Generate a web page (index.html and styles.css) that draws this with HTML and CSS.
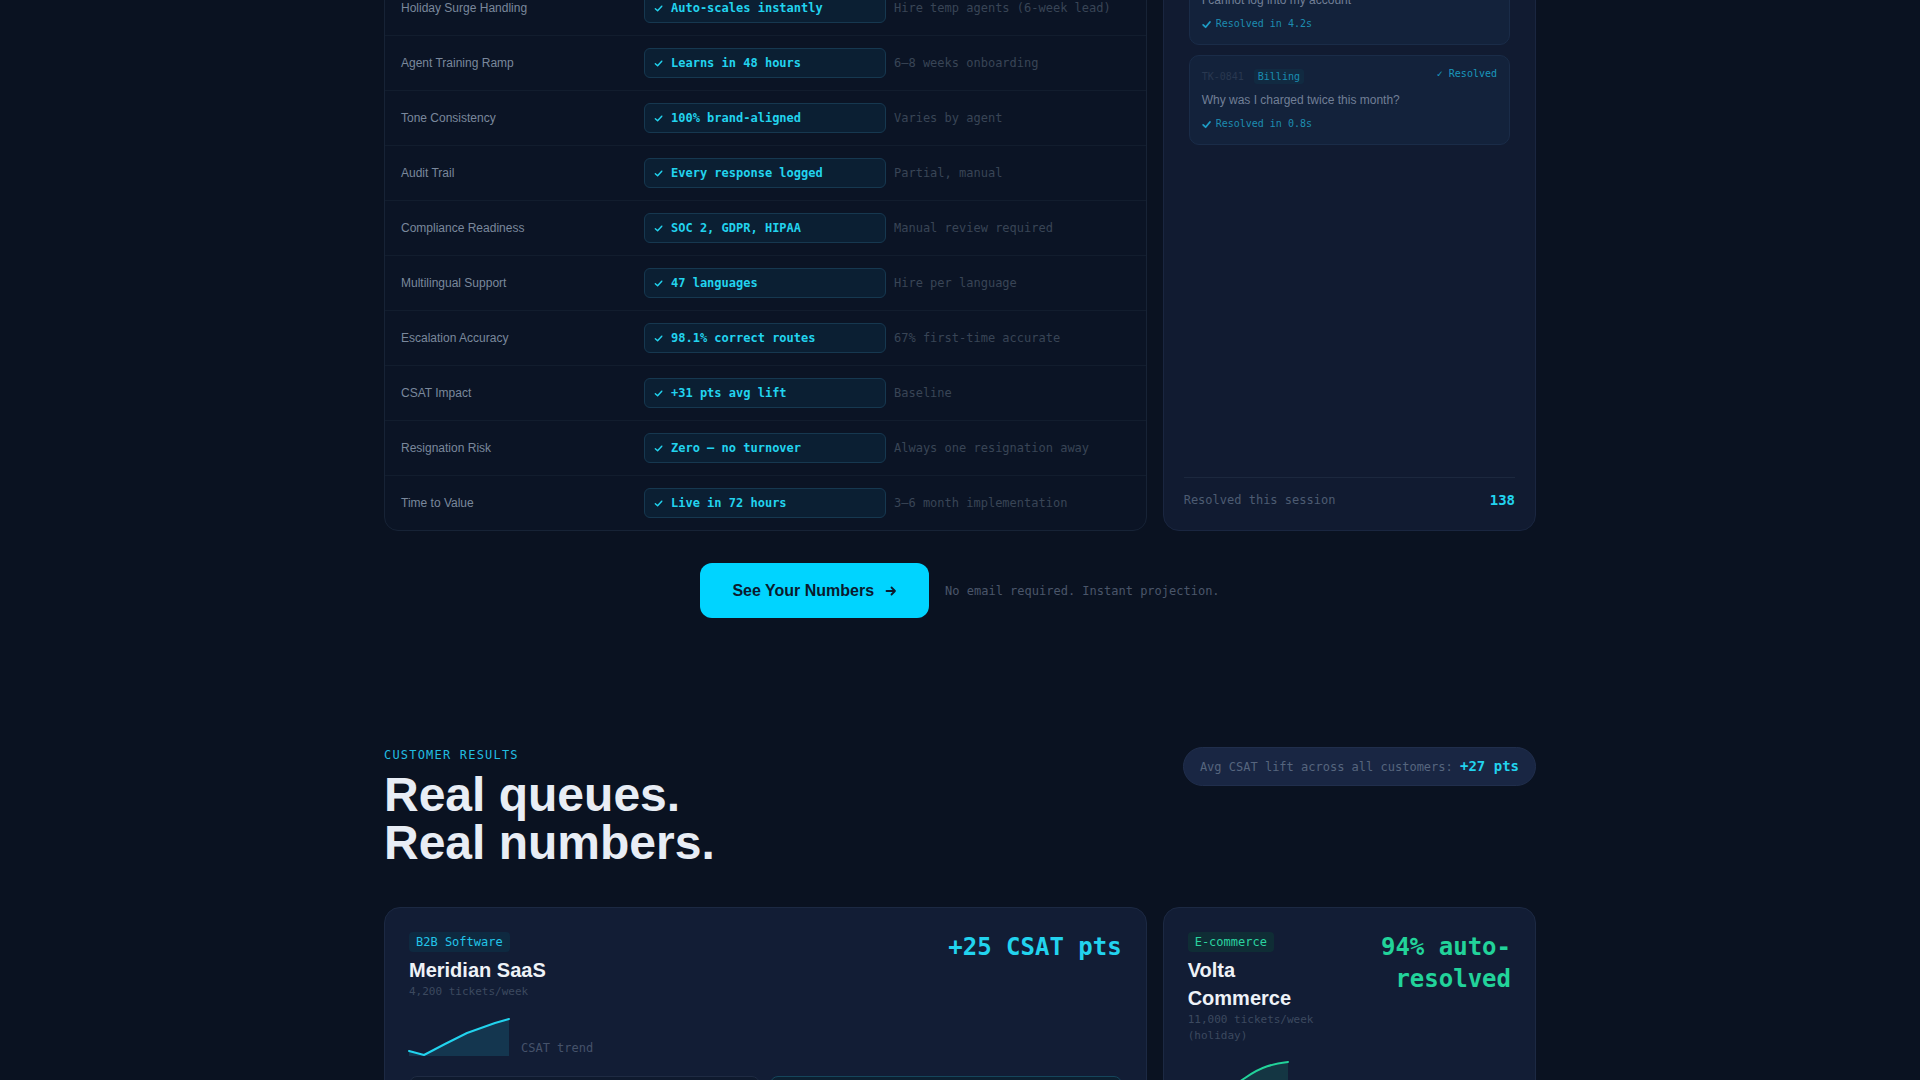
FILE: index.html
```html
<!DOCTYPE html>
<html lang="en">
<head>
<meta charset="utf-8">
<title>Resolve — AI support that scales</title>
<link rel="stylesheet" href="styles.css">
</head>
<body>
<main>
  <section class="compare">
    <div class="wrap">
      <header class="sec-head">
        <p class="eyebrow">Side by side</p>
        <h2 class="sec-title">One agent. Every shift.</h2>
        <p class="sec-lead">How an AI agent stacks up against a traditional support team.</p>
      </header>

      <div class="split">
        <div class="table-card">
          <div class="trow thead">
            <span>Capability</span>
            <span>Resolve AI</span>
            <span>Human team</span>
          </div>
          <div class="trow">
            <span class="cap">First Response Time</span>
            <span class="ai"><svg class="tick" viewBox="0 0 10 10"><path d="M1.5 5.3 L4 7.6 L8.6 2.4"/></svg>Under 2 seconds</span>
            <span class="human">4–12 hours</span>
          </div>
          <div class="trow">
            <span class="cap">24/7 Coverage</span>
            <span class="ai"><svg class="tick" viewBox="0 0 10 10"><path d="M1.5 5.3 L4 7.6 L8.6 2.4"/></svg>Always on</span>
            <span class="human">Shift-dependent</span>
          </div>
          <div class="trow">
            <span class="cap">Cost per Resolution</span>
            <span class="ai"><svg class="tick" viewBox="0 0 10 10"><path d="M1.5 5.3 L4 7.6 L8.6 2.4"/></svg>$0.38 flat</span>
            <span class="human">$6–$14 loaded</span>
          </div>
          <div class="trow" id="row-surge">
            <span class="cap">Holiday Surge Handling</span>
            <span class="ai"><svg class="tick" viewBox="0 0 10 10"><path d="M1.5 5.3 L4 7.6 L8.6 2.4"/></svg>Auto-scales instantly</span>
            <span class="human">Hire temp agents (6-week lead)</span>
          </div>
          <div class="trow">
            <span class="cap">Agent Training Ramp</span>
            <span class="ai"><svg class="tick" viewBox="0 0 10 10"><path d="M1.5 5.3 L4 7.6 L8.6 2.4"/></svg>Learns in 48 hours</span>
            <span class="human">6–8 weeks onboarding</span>
          </div>
          <div class="trow">
            <span class="cap">Tone Consistency</span>
            <span class="ai"><svg class="tick" viewBox="0 0 10 10"><path d="M1.5 5.3 L4 7.6 L8.6 2.4"/></svg>100% brand-aligned</span>
            <span class="human">Varies by agent</span>
          </div>
          <div class="trow">
            <span class="cap">Audit Trail</span>
            <span class="ai"><svg class="tick" viewBox="0 0 10 10"><path d="M1.5 5.3 L4 7.6 L8.6 2.4"/></svg>Every response logged</span>
            <span class="human">Partial, manual</span>
          </div>
          <div class="trow">
            <span class="cap">Compliance Readiness</span>
            <span class="ai"><svg class="tick" viewBox="0 0 10 10"><path d="M1.5 5.3 L4 7.6 L8.6 2.4"/></svg>SOC 2, GDPR, HIPAA</span>
            <span class="human">Manual review required</span>
          </div>
          <div class="trow">
            <span class="cap">Multilingual Support</span>
            <span class="ai"><svg class="tick" viewBox="0 0 10 10"><path d="M1.5 5.3 L4 7.6 L8.6 2.4"/></svg>47 languages</span>
            <span class="human">Hire per language</span>
          </div>
          <div class="trow">
            <span class="cap">Escalation Accuracy</span>
            <span class="ai"><svg class="tick" viewBox="0 0 10 10"><path d="M1.5 5.3 L4 7.6 L8.6 2.4"/></svg>98.1% correct routes</span>
            <span class="human">67% first-time accurate</span>
          </div>
          <div class="trow">
            <span class="cap">CSAT Impact</span>
            <span class="ai"><svg class="tick" viewBox="0 0 10 10"><path d="M1.5 5.3 L4 7.6 L8.6 2.4"/></svg>+31 pts avg lift</span>
            <span class="human">Baseline</span>
          </div>
          <div class="trow">
            <span class="cap">Resignation Risk</span>
            <span class="ai"><svg class="tick" viewBox="0 0 10 10"><path d="M1.5 5.3 L4 7.6 L8.6 2.4"/></svg>Zero — no turnover</span>
            <span class="human">Always one resignation away</span>
          </div>
          <div class="trow">
            <span class="cap">Time to Value</span>
            <span class="ai"><svg class="tick" viewBox="0 0 10 10"><path d="M1.5 5.3 L4 7.6 L8.6 2.4"/></svg>Live in 72 hours</span>
            <span class="human">3–6 month implementation</span>
          </div>
        </div>

        <aside class="feed">
          <div class="feed-head">
            <div>
              <p class="feed-title">Live ticket feed</p>
              <p class="feed-sub">Streaming from the demo queue</p>
            </div>
            <span class="live"><i class="dot"></i>LIVE</span>
          </div>
          <div class="feed-list">
            <div class="ticket">
              <div class="t-head">
                <span class="t-id">TK-0839</span><span class="t-tag">Shipping</span>
                <span class="t-state">✓ Resolved</span>
              </div>
              <p class="t-q">Where is my order #48213?</p>
              <p class="t-done"><svg class="t-tick" viewBox="0 0 10 10"><path d="M1.3 5.4 L4 8 L8.8 2.2"/></svg>Resolved in 1.1s</p>
            </div>
            <div class="ticket">
              <div class="t-head">
                <span class="t-id">TK-0840</span><span class="t-tag">Account</span>
                <span class="t-state">✓ Resolved</span>
              </div>
              <p class="t-q">I cannot log into my account</p>
              <p class="t-done"><svg class="t-tick" viewBox="0 0 10 10"><path d="M1.3 5.4 L4 8 L8.8 2.2"/></svg>Resolved in 4.2s</p>
            </div>
            <div class="ticket">
              <div class="t-head">
                <span class="t-id">TK-0841</span><span class="t-tag">Billing</span>
                <span class="t-state">✓ Resolved</span>
              </div>
              <p class="t-q">Why was I charged twice this month?</p>
              <p class="t-done"><svg class="t-tick" viewBox="0 0 10 10"><path d="M1.3 5.4 L4 8 L8.8 2.2"/></svg>Resolved in 0.8s</p>
            </div>
          </div>
          <div class="feed-foot">
            <span>Resolved this session</span>
            <b>138</b>
          </div>
        </aside>
      </div>

      <div class="cta">
        <a class="btn" href="#roi">See Your Numbers
          <svg class="arrow" viewBox="0 0 12 12"><path d="M1.5 6 H10 M6.5 2.5 L10 6 L6.5 9.5"/></svg>
        </a>
        <span class="cta-note">No email required. Instant projection.</span>
      </div>
    </div>
  </section>

  <section class="results">
    <div class="wrap">
      <header class="res-head">
        <div>
          <p class="eyebrow">Customer results</p>
          <h2 class="res-title">Real queues.<br>Real numbers.</h2>
        </div>
        <p class="avg-pill">Avg CSAT lift across all customers: <b>+27 pts</b></p>
      </header>

      <div class="cases">
        <article class="case wide">
          <div class="case-top">
            <div class="case-id">
              <span class="tag">B2B Software</span>
              <h3 class="case-name">Meridian SaaS</h3>
              <p class="case-vol">4,200 tickets/week</p>
            </div>
            <p class="metric">+25 CSAT pts</p>
          </div>
          <div class="spark">
            <svg class="spark-svg" viewBox="0 0 100 40" preserveAspectRatio="none">
              <polygon class="area" points="0,35 15,39 36,28 58,17 86,7 100,3 100,40 0,40"/>
              <polyline class="line" points="0,35 15,39 36,28 58,17 86,7 100,3"/>
            </svg>
            <span class="spark-label">CSAT trend</span>
          </div>
          <div class="stats">
            <div class="stat">
              <p class="stat-k">Before</p>
              <p class="stat-v">CSAT 61 · first reply 9h 40m</p>
            </div>
            <div class="stat after">
              <p class="stat-k">After</p>
              <p class="stat-v">CSAT 86 · first reply 38s</p>
            </div>
          </div>
        </article>

        <article class="case">
          <div class="case-top">
            <div class="case-id">
              <span class="tag green">E-commerce</span>
              <h3 class="case-name">Volta Commerce</h3>
              <p class="case-vol">11,000 tickets/week (holiday)</p>
            </div>
            <p class="metric green">94% auto-resolved</p>
          </div>
          <div class="spark">
            <svg class="spark-svg" viewBox="0 0 100 40" preserveAspectRatio="none">
              <path class="area green" d="M0 38 C 20 37, 40 30, 57 18 S 85 4, 100 2 L100 40 L0 40 Z"/>
              <path class="line green" d="M0 38 C 20 37, 40 30, 57 18 S 85 4, 100 2"/>
            </svg>
            <span class="spark-label">Auto-resolution</span>
          </div>
          <div class="stats">
            <div class="stat">
              <p class="stat-k">Before</p>
              <p class="stat-v">31% deflected</p>
            </div>
            <div class="stat after green">
              <p class="stat-k">After</p>
              <p class="stat-v">94% resolved</p>
            </div>
          </div>
        </article>
      </div>
    </div>
  </section>
</main>
<script src="app.js"></script>
</body>
</html>
```

FILE: styles.css
```css
* { box-sizing: border-box; margin: 0; padding: 0; }

html { scroll-behavior: auto; background: #0a1221; }

body {
  background: #0a1221;
  color: #e6ebf3;
  font-family: "Liberation Sans", Arial, sans-serif;
}

.wrap { width: 1152px; margin: 0 auto; }

.eyebrow {
  font: 12px/16px "DejaVu Sans Mono", monospace;
  letter-spacing: 0.1em;
  text-transform: uppercase;
  color: #22bde0;
}

/* ---------- comparison ---------- */
.compare { padding: 96px 0 64px; }

.sec-head { margin-bottom: 40px; }
.sec-title { margin-top: 8px; font: 700 48px/48px "Liberation Sans", Arial, sans-serif; color: #e8edf5; }
.sec-lead { margin-top: 12px; font-size: 16px; line-height: 24px; color: #7c8aa0; }

.split {
  display: grid;
  grid-template-columns: repeat(3, 1fr);
  gap: 16px;
}

.table-card {
  grid-column: span 2;
  border: 1px solid #172336;
  border-radius: 14px;
  background: #0b1425;
  overflow: hidden;
}

.trow {
  display: grid;
  grid-template-columns: 235px 242px 1fr;
  column-gap: 8px;
  align-items: center;
  padding: 12px 16px;
  border-bottom: 1px solid #121d2e;
}
.trow:last-child { border-bottom: 0; }

.thead {
  font: 11px/16px "DejaVu Sans Mono", monospace;
  text-transform: uppercase;
  letter-spacing: 0.08em;
  color: #4f5d74;
}

.cap { font-size: 12px; line-height: 16px; color: #7a889c; }

.ai {
  display: flex;
  align-items: center;
  gap: 8px;
  height: 30px;
  padding: 0 9px;
  border: 1px solid #163850;
  border-radius: 6px;
  background: #0b1f33;
  font: 700 12px/16px "DejaVu Sans Mono", monospace;
  color: #22d3ee;
  white-space: nowrap;
}

.tick { width: 9px; height: 9px; flex: none; }
.tick path { fill: none; stroke: #22d3ee; stroke-width: 1.6; stroke-linecap: round; stroke-linejoin: round; }

.human { font: 12px/16px "DejaVu Sans Mono", monospace; color: #394556; white-space: nowrap; }

/* live ticket feed */
.feed {
  display: flex;
  flex-direction: column;
  min-height: 0;
  padding: 20px;
  border: 1px solid #1a2640;
  border-radius: 16px;
  background: #111b31;
}

.feed-head {
  display: flex;
  justify-content: space-between;
  align-items: flex-start;
  margin-bottom: 20px;
}
.feed-title { font-size: 14px; line-height: 20px; font-weight: 700; color: #d8e0eb; }
.feed-sub { margin-top: 4px; font: 11px/16px "DejaVu Sans Mono", monospace; color: #4a586e; }

.live {
  display: flex;
  align-items: center;
  gap: 6px;
  padding: 2px 8px;
  border-radius: 999px;
  background: #0e2a3a;
  font: 10px/16px "DejaVu Sans Mono", monospace;
  letter-spacing: 0.1em;
  color: #22d3ee;
}
.dot { width: 6px; height: 6px; border-radius: 50%; background: #22d3ee; }

.feed-list {
  flex: 1;
  min-height: 0;
  overflow: hidden;
  display: flex;
  flex-direction: column;
  gap: 10px;
  padding: 0 5px;
}

.ticket {
  flex: none;
  padding: 12px;
  border: 1px solid #1a2c48;
  border-radius: 10px;
  background: #13223b;
}

.t-head {
  display: flex;
  align-items: center;
  height: 16px;
  font: 10px/15px "DejaVu Sans Mono", monospace;
}
.t-id { color: #293850; }
.t-tag {
  margin-left: 10px;
  padding: 0 4px;
  border-radius: 3px;
  background: #112a41;
  color: #1a8db2;
}
.t-state { margin-left: auto; color: #1a97bd; align-self: flex-start; line-height: 12px; }

.t-q { margin-top: 8px; font-size: 12px; line-height: 16px; color: #717f96; }

.t-done {
  display: flex;
  align-items: center;
  gap: 5px;
  margin-top: 8px;
  font: 10px/16px "DejaVu Sans Mono", monospace;
  color: #1d8db1;
}
.t-tick { width: 9px; height: 9px; }
.t-tick path { fill: none; stroke: #1e9cc4; stroke-width: 2; stroke-linecap: round; stroke-linejoin: round; }

.feed-foot {
  display: flex;
  justify-content: space-between;
  align-items: center;
  margin-top: auto;
  padding-top: 12px;
  border-top: 1px solid #1c283e;
  font: 12px/20px "DejaVu Sans Mono", monospace;
  color: #4d5b72;
}
.feed-foot b { font-size: 14px; color: #22d3ee; }

/* call to action */
.cta {
  display: flex;
  justify-content: center;
  align-items: center;
  gap: 16px;
  margin-top: 32px;
}
.btn {
  display: inline-flex;
  align-items: center;
  gap: 11px;
  padding: 18px 32px;
  border-radius: 12px;
  background: #00d4ff;
  color: #0b1a2e;
  font: 700 16px/19px "Liberation Sans", Arial, sans-serif;
  text-decoration: none;
}
.arrow { width: 12px; height: 12px; }
.arrow path { fill: none; stroke: #0b1a2e; stroke-width: 1.8; stroke-linecap: round; stroke-linejoin: round; }
.cta-note { font: 12px/16px "DejaVu Sans Mono", monospace; color: #4a566a; }

/* ---------- customer results ---------- */
.results { padding: 65px 0 96px; }

.res-head {
  display: flex;
  justify-content: space-between;
  align-items: flex-start;
}
.res-title {
  margin-top: 8px;
  font: 700 48px/48px "Liberation Sans", Arial, sans-serif;
  color: #e8edf5;
}

.avg-pill {
  padding: 8px 16px;
  border: 1px solid #202e4c;
  border-radius: 999px;
  background: #192643;
  font: 12px/20px "DejaVu Sans Mono", monospace;
  color: #56657e;
}
.avg-pill b { font-size: 14px; color: #22d3ee; }

.cases {
  display: grid;
  grid-template-columns: repeat(3, 1fr);
  gap: 16px;
  margin-top: 40px;
  align-items: start;
}

.case {
  padding: 24px;
  border: 1px solid #1c2943;
  border-radius: 16px;
  background: #121d35;
}
.case.wide { grid-column: span 2; }

.case-top {
  display: flex;
  justify-content: space-between;
  align-items: flex-start;
  gap: 16px;
}

.tag {
  display: block;
  width: fit-content;
  padding: 2px 7px;
  border-radius: 4px;
  background: #0e2940;
  font: 12px/16px "DejaVu Sans Mono", monospace;
  color: #22c4e8;
}
.tag.green { background: #0f2d35; color: #2bd3a0; }

.case-name {
  margin-top: 4px;
  font: 700 20px/28px "Liberation Sans", Arial, sans-serif;
  color: #eef2f7;
}
.case-vol { font: 11px/16px "DejaVu Sans Mono", monospace; color: #3c495f; }

.metric {
  margin-top: -1px;
  font: 700 24px/32px "DejaVu Sans Mono", monospace;
  text-align: right;
  color: #22d3ee;
}
.metric.green { color: #22d39a; }

.spark {
  display: flex;
  align-items: flex-end;
  gap: 12px;
  margin-top: 16px;
}
.spark-svg { width: 100px; height: 40px; flex: none; overflow: visible; }
.spark .area { fill: #22d3ee; fill-opacity: 0.14; stroke: none; }
.spark .line { fill: none; stroke: #22d3ee; stroke-width: 2; stroke-linejoin: round; stroke-linecap: round; }
.spark .area.green { fill: #22d39a; }
.spark .line.green { stroke: #22d39a; }
.spark-label { font: 12px/16px "DejaVu Sans Mono", monospace; color: #45526a; }

.stats {
  display: grid;
  grid-template-columns: 1fr 1fr;
  gap: 10px;
  margin-top: 20px;
}
.stat {
  padding: 12px 14px;
  border: 1px solid #1f2b43;
  border-radius: 8px;
  background: #0f1a2e;
}
.stat.after { border-color: #15465c; background: #0c2031; }
.stat.after.green { border-color: #14493f; background: #0c2228; }
.stat-k {
  font: 10px/14px "DejaVu Sans Mono", monospace;
  text-transform: uppercase;
  letter-spacing: 0.1em;
  color: #4d5b72;
}
.stat-v { margin-top: 4px; font: 700 13px/18px "DejaVu Sans Mono", monospace; color: #c9d3e0; }
```

FILE: app.js
```js
// Open the page at the comparison rows: the surge row sits just under the top edge.
(function () {
  var row = document.getElementById('row-surge');
  if (!row) return;
  var top = row.getBoundingClientRect().top + window.scrollY;
  window.scrollTo(0, top + 19);
})();
```
